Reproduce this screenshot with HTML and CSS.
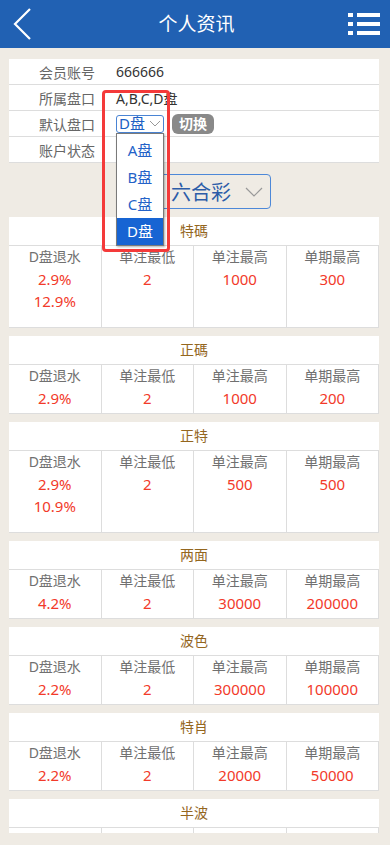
FILE: index.html
```html
<!DOCTYPE html>
<html lang="zh-CN">
<head>
    <meta charset="UTF-8">
    <meta name="viewport" content="width=device-width, initial-scale=1.0">
    <title>个人资讯</title>
    <link rel="stylesheet" href="styles.css">
</head>
<body>
    <header class="topbar">
        <svg class="back-icon" width="18" height="32" viewBox="0 0 18 32">
            <polyline points="17,1 2,16 17,31" fill="none" stroke="#fff" stroke-width="2.2"/>
        </svg>
        <h1>个人资讯</h1>
        <svg class="menu-icon" width="32" height="22" viewBox="0 0 32 22" fill="#fff">
            <rect x="0" y="0" width="5" height="4"/>
            <rect x="9" y="0" width="23" height="4"/>
            <rect x="0" y="9" width="5" height="4"/>
            <rect x="9" y="9" width="23" height="4"/>
            <rect x="0" y="18" width="5" height="4"/>
            <rect x="9" y="18" width="23" height="4"/>
        </svg>
    </header>

    <main class="content">
        <div class="info">
            <div class="info-row">
                <span class="info-label">会员账号</span>
                <span class="info-value">666666</span>
            </div>
            <div class="info-row">
                <span class="info-label">所属盘口</span>
                <span class="info-value">A,B,C,D盘</span>
            </div>
            <div class="info-row">
                <span class="info-label">默认盘口</span>
                <div class="pick">
                    <span>D盘</span>
                    <svg class="pick-arrow" width="12" height="7" viewBox="0 0 12 7">
                        <polyline points="1,1 6,6 11,1" fill="none" stroke="#999" stroke-width="1"/>
                    </svg>
                    <ul class="pick-list">
                        <li>A盘</li>
                        <li>B盘</li>
                        <li>C盘</li>
                        <li class="selected">D盘</li>
                    </ul>
                </div>
                <span class="switch-btn">切换</span>
            </div>
            <div class="info-row">
                <span class="info-label">账户状态</span>
                <span class="info-value"></span>
            </div>
            <!-- highlight box drawn over the dropdown -->
            <div class="mark"></div>
        </div>

        <div class="game">
            <span>六合彩</span>
            <svg class="game-arrow" width="18" height="10" viewBox="0 0 18 10">
                <polyline points="1,1 9,9 17,1" fill="none" stroke="#999" stroke-width="1.2"/>
            </svg>
        </div>

        <section class="limit">
            <div class="limit-title">特碼</div>
            <div class="limit-grid tall">
                <div class="limit-cell"><div class="label">D盘退水</div><div class="val">2.9%</div><div class="val">12.9%</div></div>
                <div class="limit-cell"><div class="label">单注最低</div><div class="val">2</div></div>
                <div class="limit-cell"><div class="label">单注最高</div><div class="val">1000</div></div>
                <div class="limit-cell"><div class="label">单期最高</div><div class="val">300</div></div>
            </div>
        </section>

        <section class="limit">
            <div class="limit-title">正碼</div>
            <div class="limit-grid">
                <div class="limit-cell"><div class="label">D盘退水</div><div class="val">2.9%</div></div>
                <div class="limit-cell"><div class="label">单注最低</div><div class="val">2</div></div>
                <div class="limit-cell"><div class="label">单注最高</div><div class="val">1000</div></div>
                <div class="limit-cell"><div class="label">单期最高</div><div class="val">200</div></div>
            </div>
        </section>

        <section class="limit">
            <div class="limit-title">正特</div>
            <div class="limit-grid tall">
                <div class="limit-cell"><div class="label">D盘退水</div><div class="val">2.9%</div><div class="val">10.9%</div></div>
                <div class="limit-cell"><div class="label">单注最低</div><div class="val">2</div></div>
                <div class="limit-cell"><div class="label">单注最高</div><div class="val">500</div></div>
                <div class="limit-cell"><div class="label">单期最高</div><div class="val">500</div></div>
            </div>
        </section>

        <section class="limit">
            <div class="limit-title">两面</div>
            <div class="limit-grid">
                <div class="limit-cell"><div class="label">D盘退水</div><div class="val">4.2%</div></div>
                <div class="limit-cell"><div class="label">单注最低</div><div class="val">2</div></div>
                <div class="limit-cell"><div class="label">单注最高</div><div class="val">30000</div></div>
                <div class="limit-cell"><div class="label">单期最高</div><div class="val">200000</div></div>
            </div>
        </section>

        <section class="limit">
            <div class="limit-title">波色</div>
            <div class="limit-grid">
                <div class="limit-cell"><div class="label">D盘退水</div><div class="val">2.2%</div></div>
                <div class="limit-cell"><div class="label">单注最低</div><div class="val">2</div></div>
                <div class="limit-cell"><div class="label">单注最高</div><div class="val">300000</div></div>
                <div class="limit-cell"><div class="label">单期最高</div><div class="val">100000</div></div>
            </div>
        </section>

        <section class="limit">
            <div class="limit-title">特肖</div>
            <div class="limit-grid">
                <div class="limit-cell"><div class="label">D盘退水</div><div class="val">2.2%</div></div>
                <div class="limit-cell"><div class="label">单注最低</div><div class="val">2</div></div>
                <div class="limit-cell"><div class="label">单注最高</div><div class="val">20000</div></div>
                <div class="limit-cell"><div class="label">单期最高</div><div class="val">50000</div></div>
            </div>
        </section>

        <!-- last block runs past the bottom of the scroll area -->
        <section class="limit">
            <div class="limit-title">半波</div>
            <div class="limit-grid">
                <div class="limit-cell empty"></div>
                <div class="limit-cell empty"></div>
                <div class="limit-cell empty"></div>
                <div class="limit-cell empty"></div>
            </div>
        </section>
    </main>
</body>
</html>
```

FILE: styles.css
```css
/* page */
* {
    box-sizing: border-box;
}

body {
    margin: 0;
    background: #efebe4;
    font-family: "Noto Sans", "Noto Sans CJK SC", sans-serif;
}

/* header */
.topbar {
    height: 48px;
    background: #2161b3;
    color: #fff;
    display: grid;
    grid-template-columns: 1fr auto 1fr;
    align-items: center;
    padding: 0 10px 0 13px;
}

.topbar h1 {
    margin: 0;
    font-size: 19px;
    font-weight: normal;
    line-height: 1;
}

.back-icon {
    display: block;
}

.menu-icon {
    display: block;
    justify-self: end;
}

/* scroll area */
.content {
    height: 785px;
    overflow: hidden;
    padding: 11px 11px 0 9px;
}

/* member info */
.info {
    position: relative;
    background: #fff;
}

.info-row {
    display: flex;
    align-items: center;
    height: 26px;
    border-bottom: 1px solid #ddd;
    font-size: 14px;
}

.info-label {
    width: 107px;
    padding-left: 30px;
    color: #666;
}

.info-value {
    color: #333;
}

.pick {
    position: relative;
    display: flex;
    align-items: center;
    width: 48px;
    height: 18px;
    padding-left: 2px;
    border: 1px solid #4a84d4;
    border-radius: 3px;
    color: #1d5fc4;
    font-size: 15px;
    line-height: 1;
}

.pick-arrow {
    margin-left: auto;
    margin-right: 2px;
}

.pick-list {
    position: absolute;
    top: 17px;
    left: -1px;
    width: 48px;
    margin: 0;
    padding: 3px 0 0;
    list-style: none;
    background: #fff;
    border: 1px solid #7a7a7a;
    box-shadow: 1px 1px 2px rgba(0, 0, 0, 0.3);
    z-index: 5;
}

.pick-list li {
    height: 27px;
    line-height: 27px;
    text-align: center;
    color: #2462c8;
}

.pick-list li.selected {
    background: #1764d3;
    color: #fff;
}

.switch-btn {
    margin-left: 8px;
    height: 20px;
    line-height: 20px;
    padding: 0 7px;
    border-radius: 6px;
    background: #898989;
    color: #fff;
    font-weight: bold;
}

.mark {
    position: absolute;
    left: 93px;
    top: 31px;
    width: 68px;
    height: 162px;
    border: 3px solid #f43a3a;
    border-radius: 4px;
    pointer-events: none;
    z-index: 6;
}

/* lottery select */
.game {
    display: flex;
    align-items: center;
    width: 154px;
    height: 35px;
    margin: 11px auto 8px;
    padding: 0 7px 0 53px;
    border: 1px solid #4d88d8;
    border-radius: 4px;
    color: #2c5ca8;
    font-size: 20px;
}

.game-arrow {
    margin-left: auto;
}

/* limit tables */
.limit {
    background: #fff;
    border-bottom: 1px solid #ddd;
    margin-bottom: 8px;
}

.limit-title {
    height: 29px;
    line-height: 28px;
    text-align: center;
    color: #94661e;
    font-size: 14px;
    border-bottom: 1px solid #ddd;
}

.limit-grid {
    display: grid;
    grid-template-columns: repeat(4, 1fr);
}

.limit-cell {
    text-align: center;
    border-right: 1px solid #ddd;
    padding-bottom: 4px;
    line-height: 22px;
}

.limit-cell.empty {
    height: 48px;
}

.limit-grid.tall .limit-cell {
    padding-bottom: 15px;
}

.limit-cell .label {
    color: #707070;
    font-size: 14px;
}

.limit-cell .val {
    color: #f23a2a;
    font-size: 15px;
}
```
